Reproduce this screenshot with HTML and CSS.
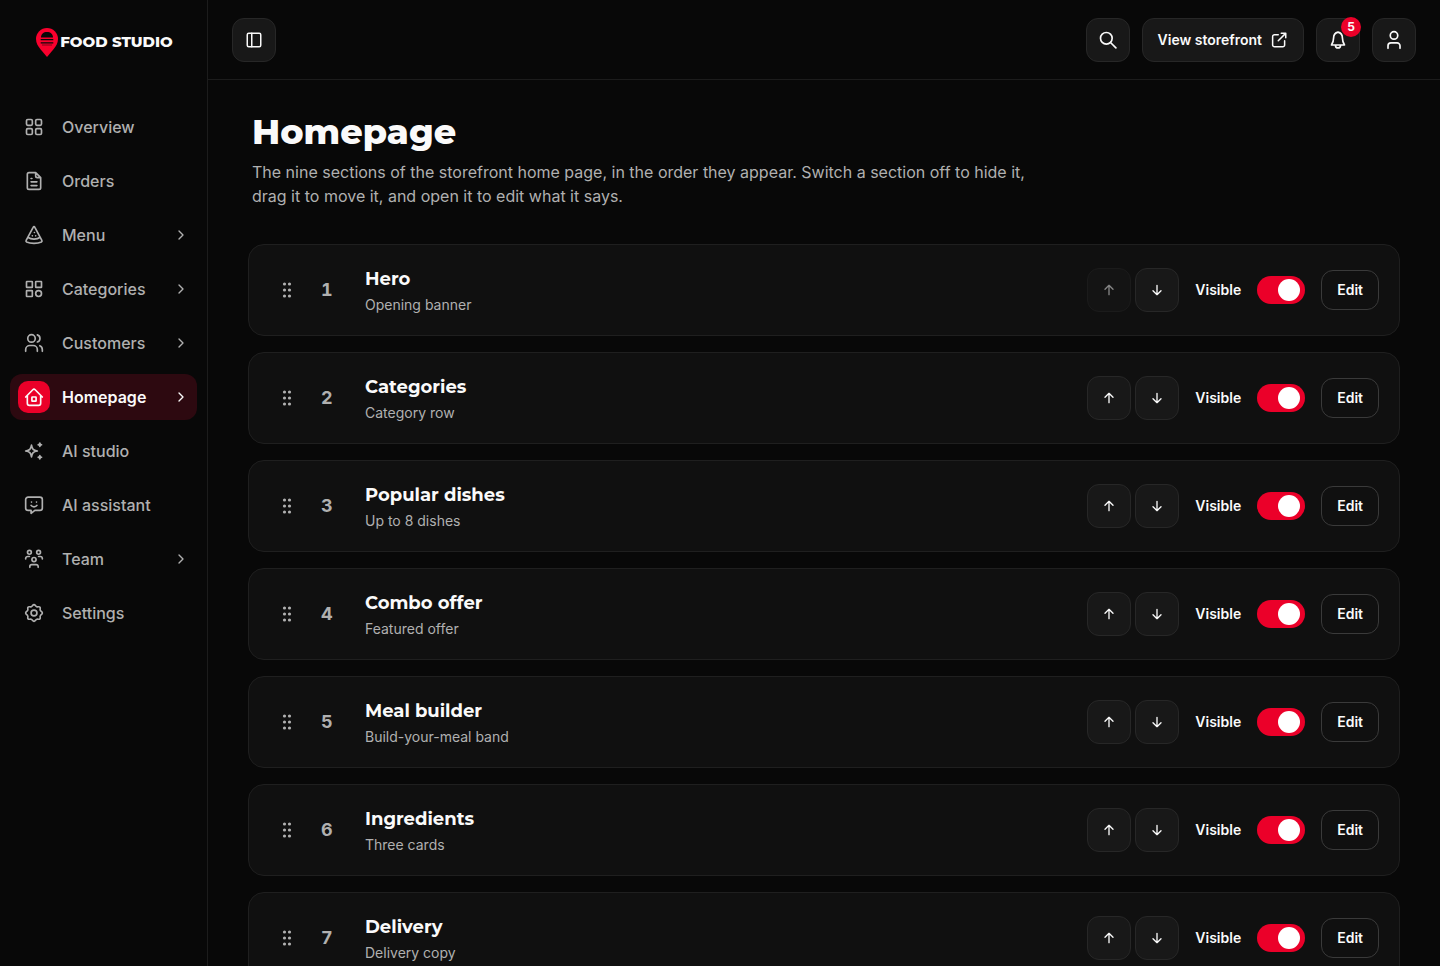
FILE: index.html
```html
<!DOCTYPE html>
<html lang="en">
<head>
	<meta charset="UTF-8">
	<meta name="viewport" content="width=device-width, initial-scale=1">
	<title>Homepage</title>
	<link rel="stylesheet" href="styles.css">
</head>
<body>
<!-- shared icons -->
<svg class="sprite" aria-hidden="true">
	<symbol id="chevron" viewBox="0 0 24 24"><path d="M9 6l6 6-6 6"/></symbol>
	<symbol id="up" viewBox="0 0 24 24"><path d="M12 19V5M6 11l6-6 6 6"/></symbol>
	<symbol id="down" viewBox="0 0 24 24"><path d="M12 5v14M6 13l6 6 6-6"/></symbol>
	<symbol id="grip" viewBox="0 0 10 16">
		<g fill="currentColor" stroke="none">
			<circle cx="2.500" cy="2" r="1.600"/><circle cx="7.500" cy="2" r="1.600"/>
			<circle cx="2.500" cy="8" r="1.600"/><circle cx="7.500" cy="8" r="1.600"/>
			<circle cx="2.500" cy="14" r="1.600"/><circle cx="7.500" cy="14" r="1.600"/>
		</g>
	</symbol>
</svg>

<div class="app">
	<aside class="sidebar">
		<a class="logo" href="#">
			<svg class="logo-pin" viewBox="0 0 22 29">
				<path fill="#f9002d" d="M11 0a11 11 0 0 1 11 11c0 4.500-2.200 7.400-4.500 10.200L11 29l-6.500-7.800C2.200 18.400 0 15.500 0 11A11 11 0 0 1 11 0z"/>
				<path fill="#080808" d="M5 9.500C5 6 7.500 4 11 4s6 2 6 5.500zM4.700 11h12.600v1.200H4.700zM4.700 14.200h12.600v1.200H4.700zM6 16.700h10v.5H6z"/>
			</svg>
			<span>FOOD STUDIO</span>
		</a>
		<nav class="nav">
			<a class="nav-item" href="#">
				<span class="nav-icon"><svg class="icon" viewBox="0 0 24 24"><rect x="3" y="3" width="7" height="7" rx="1.500"/><rect x="14" y="3" width="7" height="7" rx="1.500"/><rect x="3" y="14" width="7" height="7" rx="1.500"/><rect x="14" y="14" width="7" height="7" rx="1.500"/></svg></span>
				<span class="nav-label">Overview</span>
			</a>
			<a class="nav-item" href="#">
				<span class="nav-icon"><svg class="icon" viewBox="0 0 24 24"><path d="M14 2H6a2 2 0 0 0-2 2v16a2 2 0 0 0 2 2h12a2 2 0 0 0 2-2V8zM14 2v4a2 2 0 0 0 2 2h4M8.500 9h1M8.500 13h7M8.500 17.500h7"/></svg></span>
				<span class="nav-label">Orders</span>
			</a>
			<a class="nav-item" href="#">
				<span class="nav-icon"><svg class="icon" viewBox="0 0 24 24"><path d="M12 2c-.6 0-.9.600-1.200 1.200L2.600 18.500c-.4.800-.2 1.500.5 1.900 4.600 2.200 13.200 2.200 17.800 0 .7-.4.900-1.100.5-1.900L13.200 3.200C12.900 2.600 12.600 2 12 2zM5 15c3.200 2.600 10.800 2.600 14 0M12.500 9h.01M10 13h.01M14 13h.01"/></svg></span>
				<span class="nav-label">Menu</span>
				<svg class="chevron"><use href="#chevron"/></svg>
			</a>
			<a class="nav-item" href="#">
				<span class="nav-icon"><svg class="icon" viewBox="0 0 24 24"><rect x="3" y="3" width="7" height="7" rx=".5"/><rect x="14" y="3" width="7" height="7" rx=".5"/><rect x="3" y="14" width="7" height="7" rx=".5"/><circle cx="17.500" cy="17.500" r="3.500"/></svg></span>
				<span class="nav-label">Categories</span>
				<svg class="chevron"><use href="#chevron"/></svg>
			</a>
			<a class="nav-item" href="#">
				<span class="nav-icon"><svg class="icon" viewBox="0 0 24 24"><circle cx="9" cy="6.500" r="4.500"/><path d="M2 22v-2a5 5 0 0 1 5-5h4a5 5 0 0 1 5 5v2M16 2.200a4.500 4.500 0 0 1 0 8.600M19 15.200c2 .7 3 2.500 3 4.800v2"/></svg></span>
				<span class="nav-label">Customers</span>
				<svg class="chevron"><use href="#chevron"/></svg>
			</a>
			<a class="nav-item active" href="#" aria-current="page">
				<span class="nav-icon"><svg class="icon" viewBox="0 0 24 24"><path d="M2 12l8.600-8.700a2 2 0 0 1 2.800 0L22 12M4 10v9.500A2.500 2.500 0 0 0 6.500 22h11a2.500 2.500 0 0 0 2.500-2.500V10"/><rect x="9.500" y="12" width="5" height="5" rx=".5"/></svg></span>
				<span class="nav-label">Homepage</span>
				<svg class="chevron"><use href="#chevron"/></svg>
			</a>
			<a class="nav-item" href="#">
				<span class="nav-icon"><svg class="icon" viewBox="0 0 24 24"><path d="M9 5c.8 4.800 2.200 6.200 7 7-4.800.8-6.200 2.200-7 7-.8-4.800-2.200-6.200-7-7 4.800-.8 6.200-2.200 7-7z"/><path d="M19 2.500c.3 1.500.5 1.700 2 2-1.500.3-1.700.5-2 2-.3-1.500-.5-1.700-2-2 1.500-.3 1.700-.5 2-2zM19 17.500c.3 1.500.5 1.700 2 2-1.500.3-1.700.5-2 2-.3-1.500-.5-1.700-2-2 1.500-.3 1.700-.5 2-2z"/></svg></span>
				<span class="nav-label">AI studio</span>
			</a>
			<a class="nav-item" href="#">
				<span class="nav-icon"><svg class="icon" viewBox="0 0 24 24"><path d="M5 2.500h14a3 3 0 0 1 3 3v10a3 3 0 0 1-3 3h-6L8.500 22v-3.500H5a3 3 0 0 1-3-3v-10a3 3 0 0 1 3-3zM9 8.500h.01M15 8.500h.01M8.500 12.500c1.500 2.300 5.500 2.300 7 0"/></svg></span>
				<span class="nav-label">AI assistant</span>
			</a>
			<a class="nav-item" href="#">
				<span class="nav-icon"><svg class="icon" viewBox="0 0 24 24"><circle cx="6.500" cy="4" r="2.300"/><circle cx="17.500" cy="4" r="2.300"/><circle cx="12" cy="12.700" r="2.500"/><path d="M2 12v-.5A2.500 2.500 0 0 1 4.500 9h2M22 12v-.5A2.500 2.500 0 0 0 19.500 9h-2M7 22v-1a2.300 2.300 0 0 1 2.300-2.300h5.400A2.300 2.300 0 0 1 17 21v1"/></svg></span>
				<span class="nav-label">Team</span>
				<svg class="chevron"><use href="#chevron"/></svg>
			</a>
			<a class="nav-item" href="#">
				<span class="nav-icon"><svg class="icon" viewBox="0 0 24 24"><path d="M12 2c1.600 0 1.900 2 3.300 2.500 1.300.6 2.800-.7 3.800.4 1.100 1-.2 2.500.4 3.800C20 10.100 22 10.400 22 12s-2 1.900-2.500 3.300c-.6 1.300.7 2.800-.4 3.800-1 1.100-2.500-.2-3.800.4C13.900 20 13.600 22 12 22s-1.900-2-3.300-2.500c-1.300-.6-2.800.7-3.800-.4-1.100-1 .2-2.500-.4-3.800C4 13.900 2 13.600 2 12s2-1.900 2.500-3.300c.6-1.300-.7-2.800.4-3.800 1-1.100 2.500.2 3.800-.4C10.100 4 10.400 2 12 2z"/><circle cx="12" cy="12" r="3.500"/></svg></span>
				<span class="nav-label">Settings</span>
			</a>
		</nav>
	</aside>

	<div class="content">
		<header class="topbar">
			<button class="square-btn" type="button" aria-label="Toggle sidebar">
				<svg class="icon-top" viewBox="0 0 24 24"><rect x="3" y="3" width="18" height="18" rx="2"/><path d="M9 3v18"/></svg>
			</button>
			<div class="topbar-right">
				<button class="square-btn" type="button" aria-label="Search">
					<svg class="icon" viewBox="0 0 24 24"><circle cx="10" cy="10" r="7"/><path d="M15 15l6.500 6.500"/></svg>
				</button>
				<a class="store-btn" href="#">View storefront
					<svg class="icon-top" viewBox="0 0 24 24"><path d="M11 5H6a2.500 2.500 0 0 0-2.500 2.500v11A2.500 2.500 0 0 0 6 21h11a2.500 2.500 0 0 0 2.500-2.500V13M11 13l9.500-9.500M15 3h6v6"/></svg>
				</a>
				<button class="square-btn" type="button" aria-label="Notifications">
					<svg class="icon" viewBox="0 0 24 24"><path d="M12 2.500C8.500 3.300 6.700 6 6.700 9.500c0 4-.7 5.500-2.500 8.500h15.600c-1.800-3-2.500-4.500-2.500-8.500 0-3.500-1.800-6.200-5.300-7zM9 18.500a3 3 0 0 0 6 0"/></svg>
					<span class="badge">5</span>
				</button>
				<button class="square-btn" type="button" aria-label="Account">
					<svg class="icon" viewBox="0 0 24 24"><circle cx="12" cy="6.500" r="4.500"/><path d="M4.800 22v-3A3.500 3.500 0 0 1 8.300 15.500h7.400A3.500 3.500 0 0 1 19.200 19v3"/></svg>
				</button>
			</div>
		</header>

		<main class="main">
			<div class="page-head">
				<h1>Homepage</h1>
				<p>The nine sections of the storefront home page, in the order they appear. Switch a section off to hide it, drag it to move it, and open it to edit what it says.</p>
			</div>

			<ol class="sections">
				<li class="section">
					<button class="grip" type="button" aria-label="Drag"><svg><use href="#grip"/></svg></button>
					<span class="number">1</span>
					<div class="info"><h2>Hero</h2><p>Opening banner</p></div>
					<div class="move">
						<button class="square-btn" type="button" aria-label="Move up" disabled><svg><use href="#up"/></svg></button>
						<button class="square-btn" type="button" aria-label="Move down"><svg><use href="#down"/></svg></button>
					</div>
					<label class="visible">Visible <input type="checkbox" role="switch" checked></label>
					<button class="edit-btn" type="button">Edit</button>
				</li>
				<li class="section">
					<button class="grip" type="button" aria-label="Drag"><svg><use href="#grip"/></svg></button>
					<span class="number">2</span>
					<div class="info"><h2>Categories</h2><p>Category row</p></div>
					<div class="move">
						<button class="square-btn" type="button" aria-label="Move up"><svg><use href="#up"/></svg></button>
						<button class="square-btn" type="button" aria-label="Move down"><svg><use href="#down"/></svg></button>
					</div>
					<label class="visible">Visible <input type="checkbox" role="switch" checked></label>
					<button class="edit-btn" type="button">Edit</button>
				</li>
				<li class="section">
					<button class="grip" type="button" aria-label="Drag"><svg><use href="#grip"/></svg></button>
					<span class="number">3</span>
					<div class="info"><h2>Popular dishes</h2><p>Up to 8 dishes</p></div>
					<div class="move">
						<button class="square-btn" type="button" aria-label="Move up"><svg><use href="#up"/></svg></button>
						<button class="square-btn" type="button" aria-label="Move down"><svg><use href="#down"/></svg></button>
					</div>
					<label class="visible">Visible <input type="checkbox" role="switch" checked></label>
					<button class="edit-btn" type="button">Edit</button>
				</li>
				<li class="section">
					<button class="grip" type="button" aria-label="Drag"><svg><use href="#grip"/></svg></button>
					<span class="number">4</span>
					<div class="info"><h2>Combo offer</h2><p>Featured offer</p></div>
					<div class="move">
						<button class="square-btn" type="button" aria-label="Move up"><svg><use href="#up"/></svg></button>
						<button class="square-btn" type="button" aria-label="Move down"><svg><use href="#down"/></svg></button>
					</div>
					<label class="visible">Visible <input type="checkbox" role="switch" checked></label>
					<button class="edit-btn" type="button">Edit</button>
				</li>
				<li class="section">
					<button class="grip" type="button" aria-label="Drag"><svg><use href="#grip"/></svg></button>
					<span class="number">5</span>
					<div class="info"><h2>Meal builder</h2><p>Build-your-meal band</p></div>
					<div class="move">
						<button class="square-btn" type="button" aria-label="Move up"><svg><use href="#up"/></svg></button>
						<button class="square-btn" type="button" aria-label="Move down"><svg><use href="#down"/></svg></button>
					</div>
					<label class="visible">Visible <input type="checkbox" role="switch" checked></label>
					<button class="edit-btn" type="button">Edit</button>
				</li>
				<li class="section">
					<button class="grip" type="button" aria-label="Drag"><svg><use href="#grip"/></svg></button>
					<span class="number">6</span>
					<div class="info"><h2>Ingredients</h2><p>Three cards</p></div>
					<div class="move">
						<button class="square-btn" type="button" aria-label="Move up"><svg><use href="#up"/></svg></button>
						<button class="square-btn" type="button" aria-label="Move down"><svg><use href="#down"/></svg></button>
					</div>
					<label class="visible">Visible <input type="checkbox" role="switch" checked></label>
					<button class="edit-btn" type="button">Edit</button>
				</li>
				<li class="section">
					<button class="grip" type="button" aria-label="Drag"><svg><use href="#grip"/></svg></button>
					<span class="number">7</span>
					<div class="info"><h2>Delivery</h2><p>Delivery copy</p></div>
					<div class="move">
						<button class="square-btn" type="button" aria-label="Move up"><svg><use href="#up"/></svg></button>
						<button class="square-btn" type="button" aria-label="Move down"><svg><use href="#down"/></svg></button>
					</div>
					<label class="visible">Visible <input type="checkbox" role="switch" checked></label>
					<button class="edit-btn" type="button">Edit</button>
				</li>
			</ol>
		</main>
	</div>
</div>
</body>
</html>
```
FILE: styles.css
```css
* { box-sizing: border-box; }
body,h1,h2,p,ol { margin: 0; padding: 0; }
body { background: #080808; color: #fafafa; font-size: 16px; line-height: 24px; font-family: Inter, "Liberation Sans", Arial, sans-serif; }
a { color: inherit; text-decoration: none; }
ol { list-style: none; }
button, input { margin: 0; padding: 0; font: inherit; color: inherit; cursor: pointer; }
svg { display: block; flex: none; fill: none; stroke: currentColor; stroke-width: 2; stroke-linecap: round; stroke-linejoin: round; }
.sprite { display: none; }
.icon { width: 20px; height: 20px; }
.icon-top { width: 18px; height: 18px; }

.app { display: flex; height: 100vh; }

/* sidebar */
.sidebar { width: 208px; flex: none; border-right: 1px solid #1c1c1c; }
.logo { display: flex; align-items: center; justify-content: center; gap: 2px; height: 84px; padding-left: 2px; font-family: Montserrat, Lato, sans-serif; font-size: 15px; font-weight: 800; white-space: nowrap; }
.logo-pin { width: 22px; height: 29px; stroke: none; }
.nav { display: flex; flex-direction: column; gap: 8px; padding: 20px 10px; }
.nav-item { display: flex; align-items: center; gap: 12px; height: 46px; padding: 0 8px; border-radius: 12px; color: #b0b0b0; font-weight: 500; }
.nav-icon { display: flex; align-items: center; justify-content: center; width: 32px; height: 32px; border-radius: 10px; }
.nav-label { flex: 1; }
.chevron { width: 16px; height: 16px; }
.nav-item.active { background: #2d0910; color: #fafafa; font-weight: 600; }
.nav-item.active .nav-icon { background: #eb0029; }

/* top bar */
.content { flex: 1; min-width: 0; display: flex; flex-direction: column; }
.topbar { display: flex; align-items: center; justify-content: space-between; flex: none; height: 80px; padding: 0 24px; border-bottom: 1px solid #1c1c1c; }
.topbar-right { display: flex; gap: 12px; }
.square-btn { position: relative; display: flex; align-items: center; justify-content: center; width: 44px; height: 44px; border: 1px solid #272727; border-radius: 12px; background: #181818; }
.store-btn { display: flex; align-items: center; gap: 8px; height: 44px; padding: 0 15px; border: 1px solid #272727; border-radius: 12px; background: #181818; font-size: 14px; font-weight: 600; }
.badge { position: absolute; top: -2px; right: -2px; width: 20px; height: 20px; border-radius: 50%; background: #eb0029; font-size: 12px; line-height: 20px; font-weight: 700; text-align: center; }

/* page */
.main { flex: 1; min-height: 0; overflow-y: auto; scrollbar-width: none; padding: 32px 40px; }
.page-head { padding: 0 4px; max-width: 790px; }
.page-head h1 { margin-bottom: 8px; font-family: Montserrat, Inter, sans-serif; font-size: 35px; line-height: 40px; font-weight: 800; }
.page-head p { color: #b0b0b0; }

.sections { display: flex; flex-direction: column; gap: 16px; margin-top: 36px; }
.section { display: flex; align-items: center; gap: 16px; padding: 20px; border: 1px solid #1f1f1f; border-radius: 16px; background: #101010; }
.grip { display: flex; align-items: center; justify-content: center; width: 36px; height: 44px; border: 0; background: none; color: #b0b0b0; cursor: grab; }
.grip svg { width: 10px; height: 16px; }
.number { width: 28px; color: #b0b0b0; font-size: 18px; font-weight: 700; font-variant-numeric: tabular-nums; }
.info { flex: 1; }
.info h2 { margin-bottom: 2px; font-family: Montserrat, Inter, sans-serif; font-size: 18px; line-height: 28px; font-weight: 700; }
.info p { color: #b0b0b0; font-size: 14px; line-height: 20px; }
.move { display: flex; gap: 4px; }
.move svg { width: 16px; height: 16px; }
.move .square-btn:disabled { opacity: .5; cursor: default; }
.visible { display: flex; align-items: center; gap: 16px; font-size: 14px; font-weight: 600; }
.visible input { appearance: none; display: flex; align-items: center; width: 48px; height: 28px; padding: 0 3px; border-radius: 14px; background: #333; }
.visible input::before { content: ""; width: 22px; height: 22px; border-radius: 50%; background: #fff; }
.visible input:checked { justify-content: flex-end; padding-right: 5px; background: #eb0029; }
.edit-btn { height: 40px; padding: 0 15px; border: 1px solid #3a3a3a; border-radius: 12px; background: none; font-size: 14px; font-weight: 600; }
```
